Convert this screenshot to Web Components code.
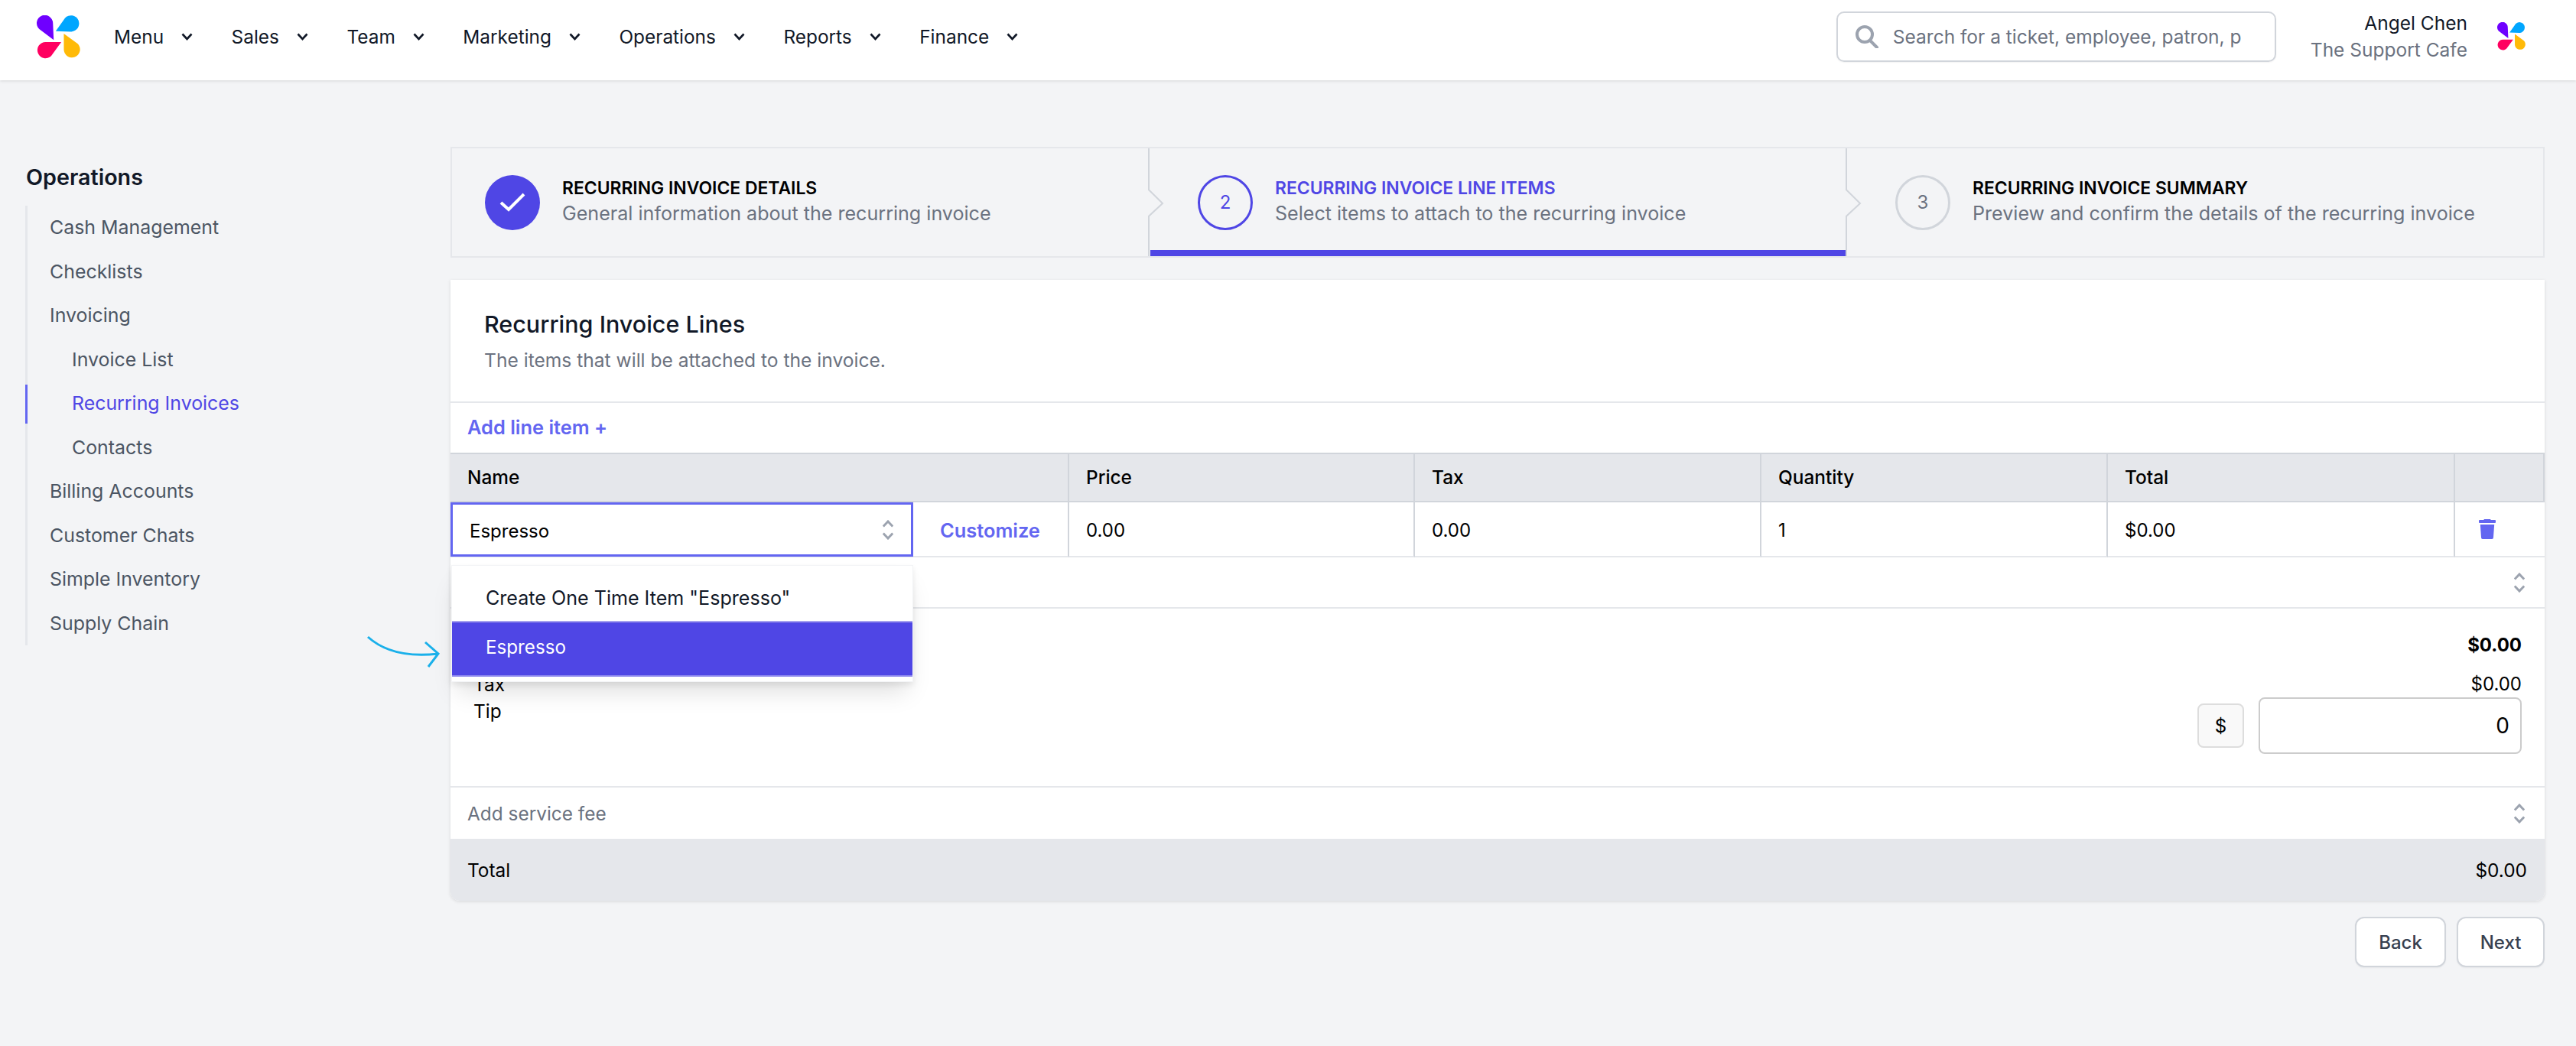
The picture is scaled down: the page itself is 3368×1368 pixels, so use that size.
<!DOCTYPE html>
<html lang="en"><head><meta charset="utf-8"><title>Recurring Invoice</title>
<style>
html,body{margin:0;padding:0;height:1368px;overflow:hidden;background:#f3f4f6;font-family:Inter,"Noto Sans",sans-serif}
</style></head><body>
<app-page></app-page>
<script>
const logo=`<svg viewBox="53 58 172 171" width="100%" height="100%" style="display:block"><path fill="#6f00ff" d="M120 155 L63 112 A32 32 0 1 1 117 88 Z"/><path fill="#00a6ff" d="M128 120 L165 68 A32 32 0 1 1 190 122 Z"/><path fill="#ff0060" d="M150 163 L88 163 A32 32 0 1 0 110 218 Z"/><path fill="#ffba08" d="M160 130 L160 192 A32 32 0 1 0 215 170 Z"/></svg>`;
function def(name,css,html){
  customElements.define(name,class extends HTMLElement{
    constructor(){super();const s=this.attachShadow({mode:'open'});s.innerHTML=`<style>${css}</style>${typeof html==='function'?html(this):html}`;}
  });
}
def('brand-logo',`:host{display:block;width:var(--s,57px);height:var(--s,57px)}`,logo);
def('updown-icon',`:host{display:block;width:14px;height:26px}`,`<svg width="14" height="26" viewBox="0 0 14 26" fill="none" stroke="#9ca3af" stroke-width="3" style="display:block"><path d="M.8 8.500 7 2l6.200 6.500M.8 17.500 7 24l6.200-6.500"/></svg>`);
def('nav-item',`:host{display:flex;align-items:center;font-size:24.4px;color:#111827;line-height:34px}svg{margin-left:23px;display:block}`,`<slot></slot><svg width="15" height="10" viewBox="0 0 15 10" fill="none" stroke="#111827" stroke-width="2.6"><path d="M1.500 1.500 7.500 8l6-6.500"/></svg>`);
def('app-header',`:host{display:flex;align-items:center;box-sizing:border-box;height:105px;padding:0 66px 9px 48px;background:#fff;box-shadow:0 1px 4px rgba(0,0,0,.13);position:relative;z-index:2}
nav{display:flex;gap:50.5px;margin-left:44px}
.search{margin-left:auto;display:flex;align-items:center;box-sizing:border-box;width:575px;height:66px;border:2px solid #d1d5db;border-radius:10px;padding-left:22px;box-shadow:0 1px 2px rgba(0,0,0,.05);font-size:24.5px;color:#6b7280;white-space:nowrap;overflow:hidden}
.search svg{margin-right:18px;flex:none}
.search span{display:block;width:456px;overflow:hidden}
.user{margin-left:45px;text-align:right;font-size:24.5px;line-height:35px;color:#111827}
.user div+div{color:#6b7280}
brand-logo{--s:37px;margin-left:39px;margin-top:-1px}
`,`<brand-logo style="--s:57px;margin:0"></brand-logo><nav><slot></slot></nav>
<div class="search"><svg width="32" height="30" viewBox="0 0 32 30" fill="none" stroke="#9ca3af" stroke-width="4"><circle cx="13" cy="12" r="10"/><path d="M20 20l9 9" stroke-linecap="round"/></svg><span>Search for a ticket, employee, patron, p</span></div>
<div class="user"><div>Angel Chen</div><div>The Support Cafe</div></div><brand-logo></brand-logo>`);
def('side-link',`:host{display:block;box-sizing:border-box;height:57.55px;line-height:57.55px;font-size:24.9px;color:#4b5563;padding-left:32px;position:relative}
:host([sub]){padding-left:61px}
:host([active]){color:#4f46e5}
:host([active])::before{content:"";position:absolute;left:0;top:4px;bottom:3px;width:3px;background:#6366f1}`,`<slot></slot>`);
def('side-nav',`:host{display:block;width:589px;box-sizing:border-box;padding-left:33px;flex:none}
h2{margin:0 0 0 1px;font-size:28.7px;font-weight:600;line-height:40px;color:#111827;padding-top:20px}
.list{margin-top:17px;background:linear-gradient(#e5e7eb,#e5e7eb) left/3px 100% no-repeat}`,`<h2>Operations</h2><div class="list"><slot></slot></div>`);
def('step-item',`:host{display:flex;align-items:center;box-sizing:border-box;position:relative;height:100%;padding-left:var(--pl,43px);gap:29px}
.c{width:72px;height:72px;flex:none;border-radius:50%;box-sizing:border-box;display:flex;align-items:center;justify-content:center;font-size:24px}
:host([state=done]) .c{background:#4f46e5}
:host([state=current]) .c{border:3px solid #4f46e5;color:#4f46e5}
:host([state=todo]) .c{border:3px solid #d1d5db;color:#6b7280}
.txt{padding-bottom:4px}
.t{font-size:22.9px;font-weight:600;line-height:32px;color:#000;white-space:nowrap}
:host([state=current]) .t{color:#4f46e5}
.s{font-size:25.1px;line-height:34px;color:#6b7280;white-space:nowrap}
.bar{display:none;position:absolute;left:1px;right:1px;bottom:0;height:8px;background:#4f46e5}
:host([state=current]) .bar{display:block}
.notch{position:absolute;left:-2px;top:0;width:22px;height:100%;display:none}
:host([notch]) .notch{display:block}
`,el=>`<div class="c">${el.getAttribute('state')==='done'?'<svg width="72" height="72" viewBox="0 0 72 72" fill="none" stroke="#fff" stroke-width="4"><path d="M21 36l10 9 20-20"/></svg>':el.getAttribute('n')}</div><div class="txt"><div class="t">${el.getAttribute('title')}</div><div class="s">${el.getAttribute('sub')}</div></div><div class="bar"></div>
<svg class="notch" viewBox="0 0 22 143" preserveAspectRatio="none" fill="#f3f4f6" stroke="#d1d5db" stroke-width="2"><path d="M1 0V55L19 73 1 90V143"/></svg>`);
def('step-bar',`:host{display:grid;grid-template-columns:912px 912px 910px;box-sizing:border-box;height:145px;border:2px solid #e5e7eb;background:#f3f4f6}`,`<slot></slot>`);
def('app-btn',`:host{display:flex;align-items:center;justify-content:center;box-sizing:border-box;height:66px;background:#fff;border:2px solid #d1d5db;border-radius:12px;font-size:24px;font-weight:500;color:#374151;box-shadow:0 1px 2px rgba(0,0,0,.05)}`,`<slot></slot>`);
def('invoice-card',`:host{display:block;background:#fff;position:relative;border-radius:0 0 12px 12px;box-shadow:0 1px 4px rgba(0,0,0,.12);height:812px;font-size:24.4px;color:#111827}
.head{box-sizing:border-box;height:161px;border-bottom:2px solid #e5e7eb;padding:38px 44px 0}
h3{margin:0;font-size:30.5px;font-weight:500;line-height:40px;color:#111827}
.head p{margin:9px 0 0;font-size:24.6px;line-height:36px;color:#6b7280}
.add{height:65px;box-sizing:border-box;padding:0 0 3px 22px;display:flex;align-items:center;font-size:25.4px;font-weight:600;color:#6366f1}
.tbl{display:grid;grid-template-columns:809px 452px 453px 453px 454px 117px}
.h{box-sizing:border-box;height:65px;background:#e5e7eb;border-top:2px solid #d1d5db;border-bottom:2px solid #d1d5db;display:flex;align-items:center;padding:0 0 1px 22px;font-weight:500;color:#000;border-right:2px solid #d1d5db}
.h:last-child,.d:last-child{border-right:0}
.d{box-sizing:border-box;height:72px;border-bottom:2px solid #e5e7eb;display:flex;align-items:center;padding:2px 0 0 22px;color:#000;border-right:2px solid #d1d5db;font-size:24px}
.name{padding:0;position:relative;align-items:flex-start}
.sel{box-sizing:border-box;width:605px;height:71px;border:3.5px solid #6366f1;display:flex;align-items:center;justify-content:space-between;padding:3px 23px 0 22px}
.sel updown-icon{margin-top:-3px}
.cust{margin-left:35px;line-height:71px;padding-top:1px;font-size:25.4px;font-weight:600;color:#6366f1}
.trash{padding:0 0 0 31px}
.line{box-sizing:border-box;height:67px;border-bottom:2px solid #e5e7eb;display:flex;align-items:center;justify-content:flex-end;padding-right:26px}
.sum{box-sizing:border-box;height:234px;border-bottom:2px solid #e5e7eb;display:flex;justify-content:space-between;color:#000}
.lab{padding:82px 0 0 30px;line-height:35px}
.val{padding:30px 30px 0 0;display:flex;flex-direction:column;align-items:flex-end;line-height:35px;font-size:24px}
.val b{font-weight:700}.val .tx{margin-top:16px}
.tip{display:flex;align-items:center;gap:19px}
.cur{box-sizing:border-box;width:61px;height:58px;border:2px solid #ddd;border-radius:8px;background:#f9f9f9;display:flex;align-items:center;justify-content:center;color:#000}
.inp{box-sizing:border-box;width:344px;height:74px;border:2px solid #ccc;border-radius:8px;display:flex;align-items:center;justify-content:flex-end;padding-right:14px;color:#000;font-size:28px}
.fee{box-sizing:border-box;height:67px;display:flex;align-items:center;justify-content:space-between;padding:0 26px 0 22px;color:#6b7280}
.total{box-sizing:border-box;height:81px;background:#e5e7eb;display:flex;align-items:center;justify-content:space-between;padding:0 23px 0 22px;color:#000;border-radius:0 0 12px 12px}
.menu{position:absolute;left:1px;top:373px;width:604px;height:153px;background:#fff;box-sizing:border-box;border:1px solid #f3f4f6;box-shadow:0 20px 30px -8px rgba(0,0,0,.13),0 4px 8px rgba(0,0,0,.08);z-index:3}
.opt{height:72px;box-sizing:border-box;padding:12px 0 0 44px;display:flex;align-items:center;color:#111827;font-size:25.1px}
.opt.on{background:#4f46e5;color:#fff;padding:0 0 5px 44px;border-top:2px solid #a5a1ee;border-bottom:2px solid #8b85ee;height:73px;font-size:24.2px}
.arrow{position:absolute;left:-110px;top:465px;z-index:4}
`,`<div class="head"><h3>Recurring Invoice Lines</h3><p>The items that will be attached to the invoice.</p></div>
<div class="add">Add line item +</div>
<div class="tbl">
<div class="h">Name</div><div class="h">Price</div><div class="h">Tax</div><div class="h">Quantity</div><div class="h">Total</div><div class="h"></div>
<div class="d name"><div class="sel"><span>Espresso</span><updown-icon></updown-icon></div><span class="cust">Customize</span></div><div class="d">0.00</div><div class="d">0.00</div><div class="d">1</div><div class="d">$0.00</div>
<div class="d trash"><svg width="22" height="26" viewBox="0 0 24 26" preserveAspectRatio="none" fill="#6366f1"><path d="M8 0h8a1 1 0 0 1 1 1h6a1 1 0 0 1 1 1v2a1 1 0 0 1-1 1H1a1 1 0 0 1-1-1V2a1 1 0 0 1 1-1h6a1 1 0 0 1 1-1zM2 7h20l-1.300 17a2 2 0 0 1-2 2H5.300a2 2 0 0 1-2-2z"/></svg></div>
</div>
<div class="line"><updown-icon></updown-icon></div>
<div class="sum"><div class="lab"><div>Tax</div><div>Tip</div></div><div class="val"><b>$0.00</b><div class="tx">$0.00</div><div class="tip"><div class="cur">$</div><div class="inp">0</div></div></div></div>
<div class="fee"><span>Add service fee</span><updown-icon></updown-icon></div>
<div class="total"><span>Total</span><span>$0.00</span></div>
<div class="menu"><div class="opt">Create One Time Item "Espresso"</div><div class="opt on">Espresso</div></div>
<svg class="arrow" width="100" height="50" viewBox="0 0 100 50" fill="none" stroke="#1ab0ea" stroke-width="3"><path d="M2 2C22 20 50 29 94 24M77 9 94 24 81 41"/></svg>`);
def('app-page',`:host{display:block}
.body{display:flex;padding-top:87px}
main{width:2738px;flex:none}
.c{margin-top:29px}
.btns{display:flex;justify-content:flex-end;gap:14px;margin-top:21px}
.btns app-btn:first-child{width:119px}.btns app-btn:last-child{width:115px}`,`
<app-header><nav-item>Menu</nav-item><nav-item>Sales</nav-item><nav-item>Team</nav-item><nav-item>Marketing</nav-item><nav-item>Operations</nav-item><nav-item>Reports</nav-item><nav-item>Finance</nav-item></app-header>
<div class="body"><side-nav><side-link>Cash Management</side-link><side-link>Checklists</side-link><side-link>Invoicing</side-link><side-link sub>Invoice List</side-link><side-link sub active>Recurring Invoices</side-link><side-link sub>Contacts</side-link><side-link>Billing Accounts</side-link><side-link>Customer Chats</side-link><side-link>Simple Inventory</side-link><side-link>Supply Chain</side-link></side-nav>
<main><step-bar><step-item state="done" title="RECURRING INVOICE DETAILS" sub="General information about the recurring invoice"></step-item><step-item state="current" notch style="--pl:63px" n="2" title="RECURRING INVOICE LINE ITEMS" sub="Select items to attach to the recurring invoice"></step-item><step-item state="todo" notch style="--pl:63px" n="3" title="RECURRING INVOICE SUMMARY" sub="Preview and confirm the details of the recurring invoice"></step-item></step-bar>
<invoice-card class="c"></invoice-card>
<div class="btns"><app-btn>Back</app-btn><app-btn>Next</app-btn></div></main></div>`);
</script></body></html>
